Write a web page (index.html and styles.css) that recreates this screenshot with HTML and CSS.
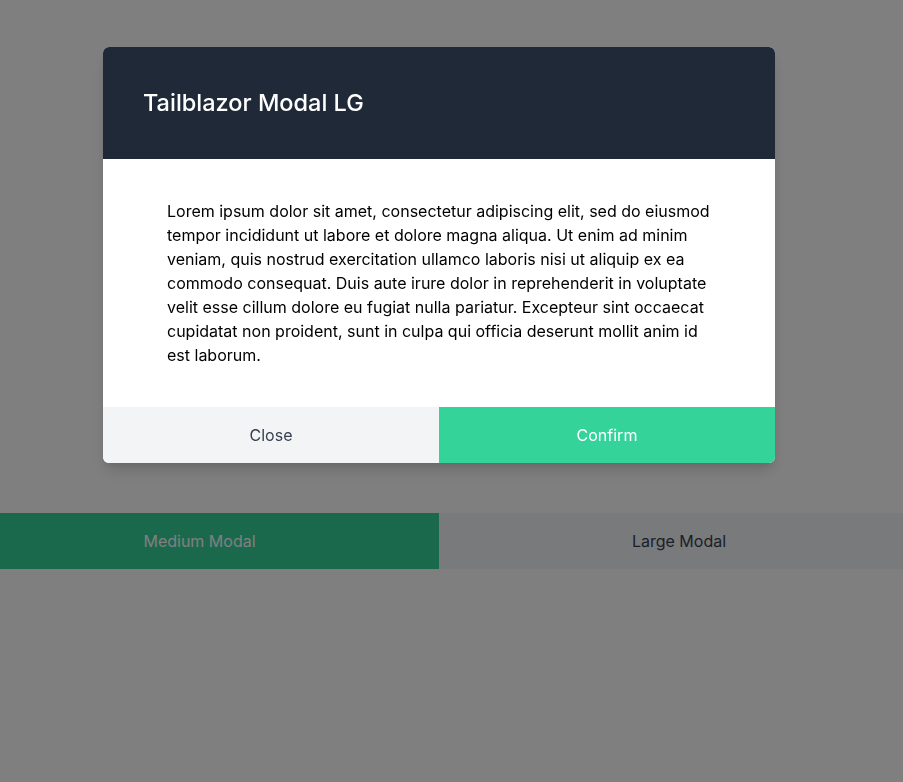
FILE: index.html
```html
<!DOCTYPE html>
<html lang="en">
<head>
<meta charset="utf-8">
<title>Tailblazor Modal</title>
<link rel="stylesheet" href="styles.css">
</head>
<body>
  <main class="page">
    <div class="actions">
      <button class="btn btn-green btn-md">Medium Modal</button>
      <button class="btn btn-gray btn-lg">Large Modal</button>
    </div>
  </main>
  <div class="overlay">
    <div class="modal">
      <header class="modal-header">
        <h2 class="modal-title">Tailblazor Modal LG</h2>
      </header>
      <div class="modal-body">
        <p>Lorem ipsum dolor sit amet, consectetur adipiscing elit, sed do eiusmod tempor incididunt ut labore et dolore magna aliqua. Ut enim ad minim veniam, quis nostrud exercitation ullamco laboris nisi ut aliquip ex ea commodo consequat. Duis aute irure dolor in reprehenderit in voluptate velit esse cillum dolore eu fugiat nulla pariatur. Excepteur sint occaecat cupidatat non proident, sunt in culpa qui officia deserunt mollit anim id est laborum.</p>
      </div>
      <footer class="modal-footer">
        <button class="btn btn-gray">Close</button>
        <button class="btn btn-green">Confirm</button>
      </footer>
    </div>
  </div>
</body>
</html>
```

FILE: styles.css
```css
* { box-sizing: border-box; }
html, body { margin: 0; padding: 0; }
body {
  background: #ffffff;
  font-family: Inter, "Noto Sans", sans-serif;
  font-size: 16px;
  line-height: 24px;
  color: #000;
  height: 782px;
  overflow: hidden;
}
.page { padding-top: 513px; }
.actions {
  display: grid;
  grid-template-columns: 439px 1fr;
}
.btn {
  font-family: inherit;
  font-size: 16px;
  line-height: 24px;
  border: 0;
  margin: 0;
  height: 56px;
  padding: 16px;
  cursor: pointer;
}
.btn-md { padding: 16px 56px 16px 16px; }
.btn-lg { padding: 16px 16px 16px 32px; }
.btn-green { background: #34d399; color: #ffffff; }
.btn-gray { background: #f3f4f6; color: #374151; }

.overlay {
  position: fixed;
  inset: 0;
  background: rgba(0, 0, 0, 0.5);
  display: flex;
  justify-content: center;
  align-items: flex-start;
  padding: 47px 25px 0 0;
}
.modal {
  width: 672px;
  border-radius: 6px;
  overflow: hidden;
  background: #fff;
  box-shadow: 0 10px 15px -3px rgba(0,0,0,0.15), 0 4px 6px -2px rgba(0,0,0,0.08);
}
.modal-header {
  background: #1f2937;
  padding: 40px;
}
.modal-title {
  margin: 0;
  color: #fff;
  font-size: 23.5px;
  line-height: 32px;
  font-weight: 500;
}
.modal-body {
  padding: 40px 64px;
}
.modal-body p { margin: 0; }
.modal-footer {
  display: grid;
  grid-template-columns: 1fr 1fr;
}
```
